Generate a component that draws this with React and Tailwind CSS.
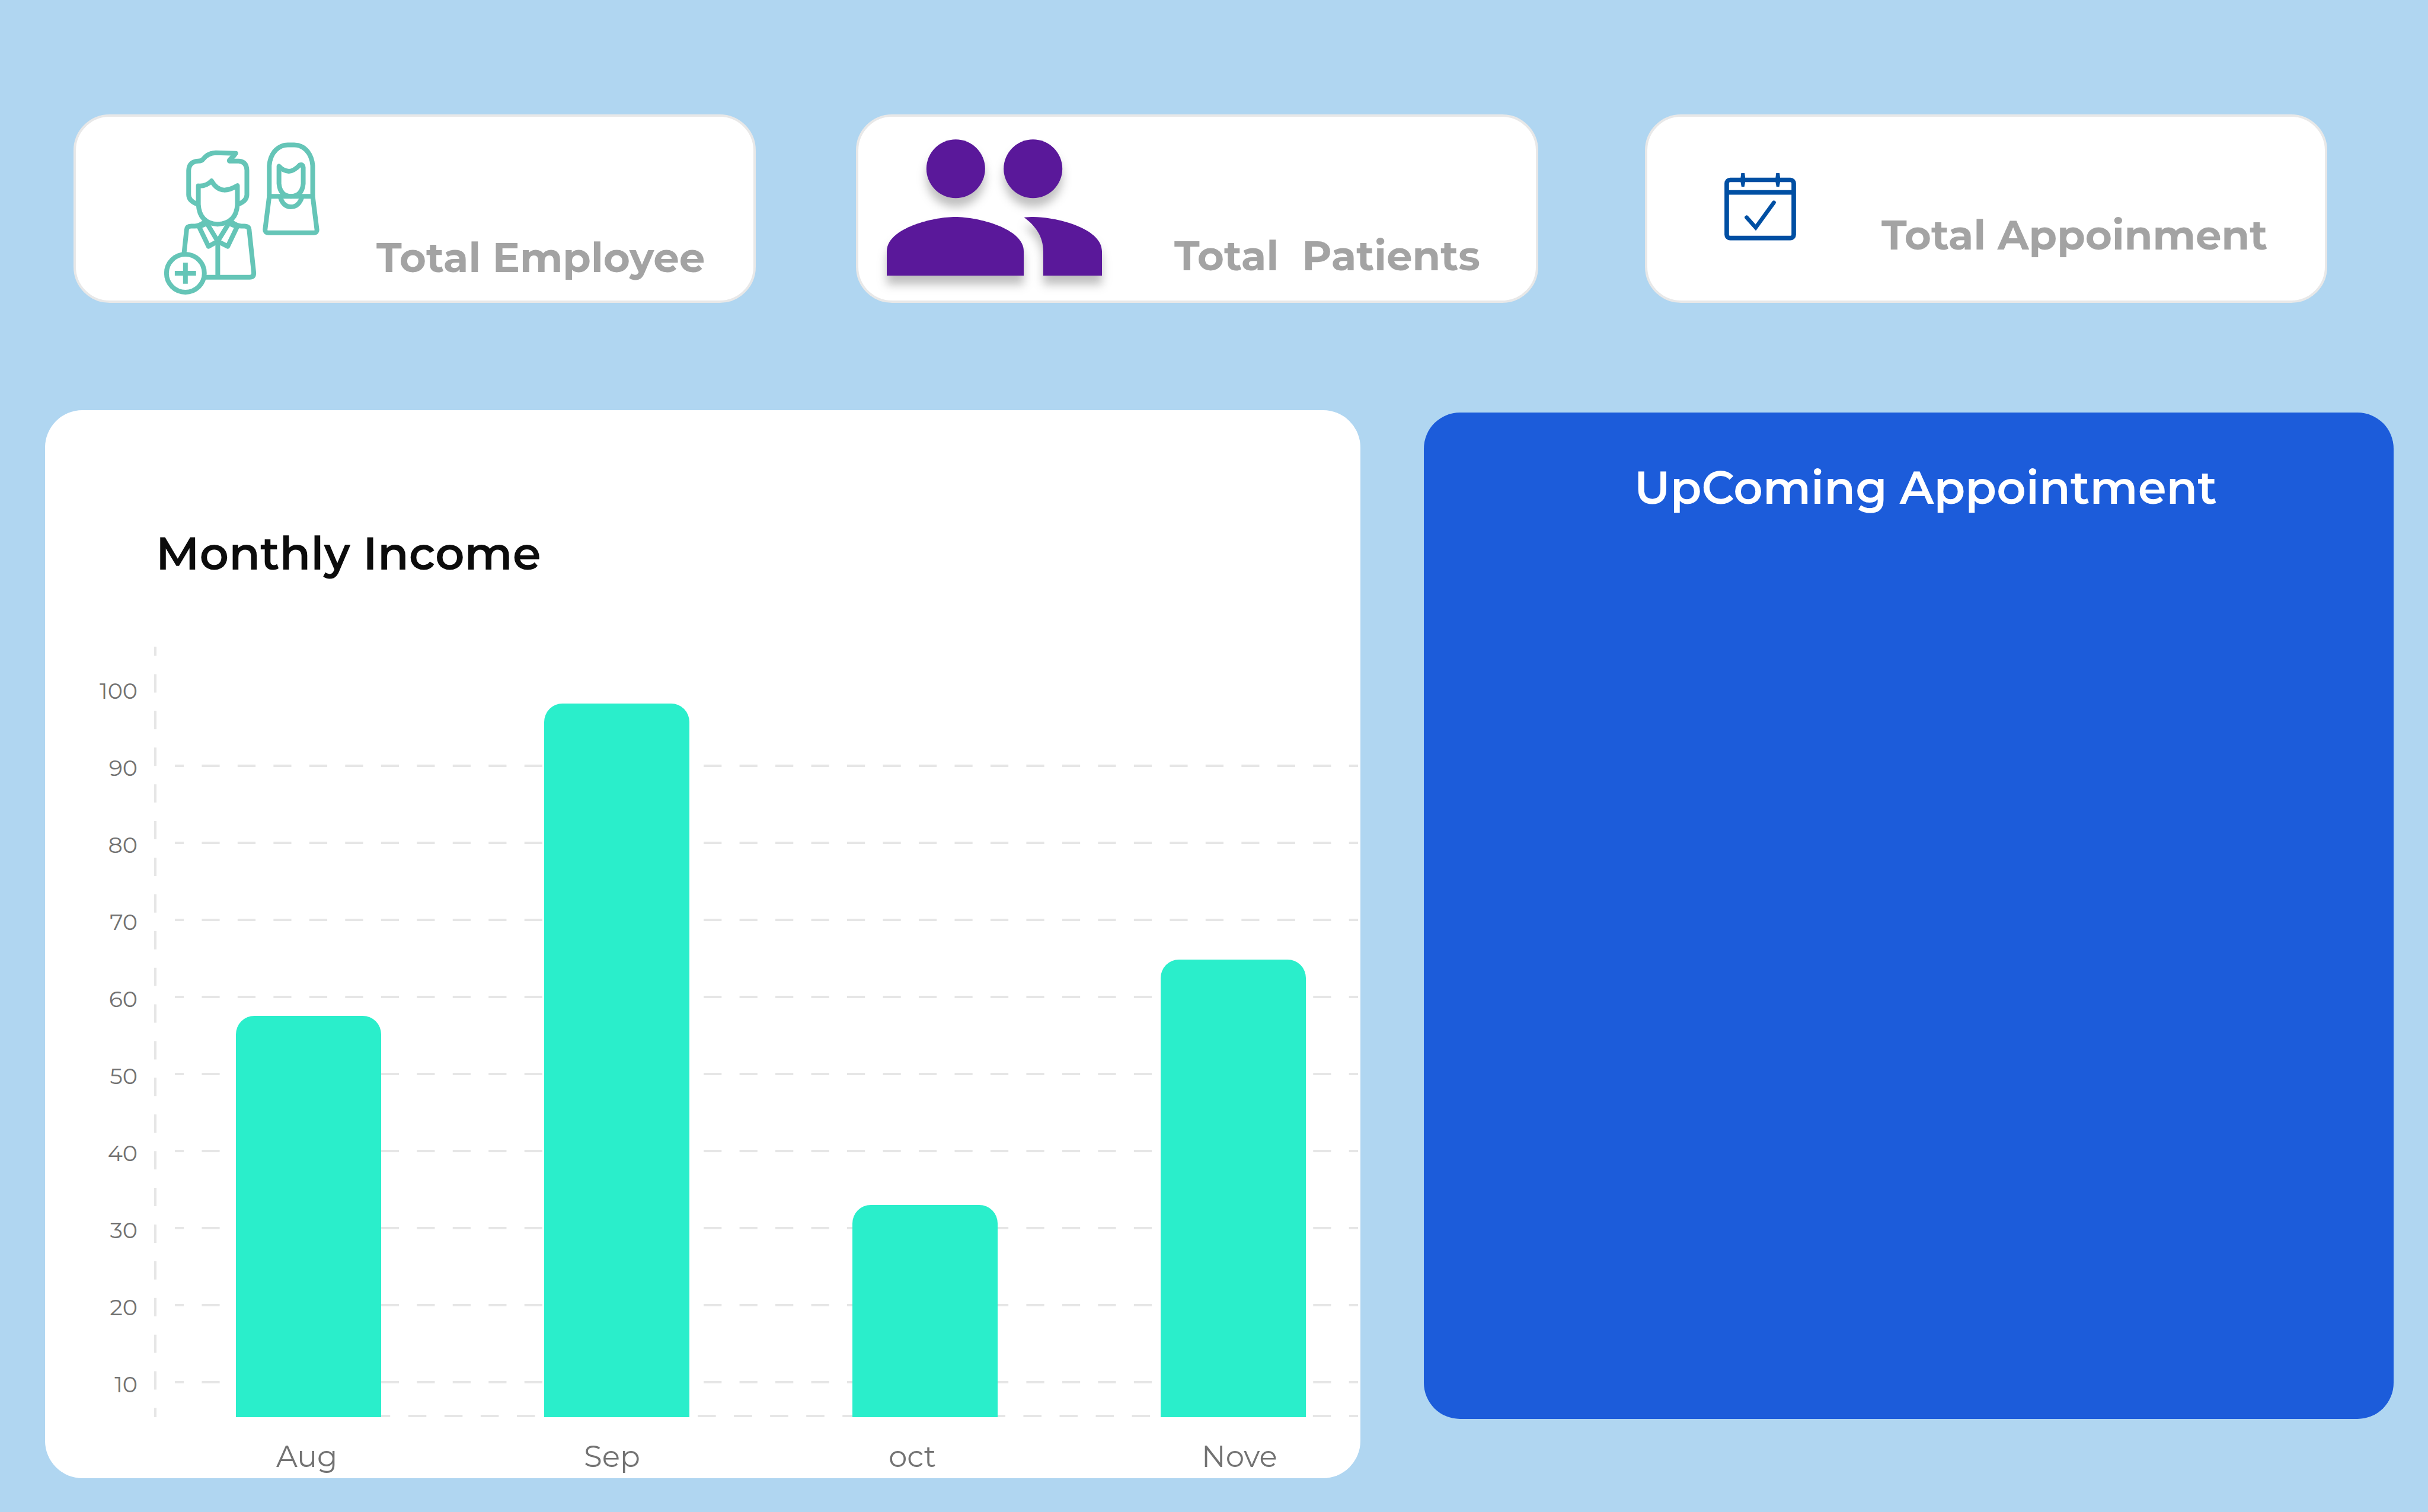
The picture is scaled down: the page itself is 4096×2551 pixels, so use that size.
const yLabels = [100, 90, 80, 70, 60, 50, 40, 30, 20, 10];
const gridLines = [201, 331, 461, 591, 721, 851, 981, 1111, 1241];

const bars = [
  { month: "Aug", x: 139, top: 623 },
  { month: "Sep", x: 659, top: 96 },
  { month: "oct", x: 1179, top: 942 },
  { month: "Nove", x: 1699, top: 528 },
];

const BAR_WIDTH = 245;
const BAR_RADIUS = 31;
const PLOT_BOTTOM = 1300;

function barPath({ x, top }) {
  const r = BAR_RADIUS;
  const right = x + BAR_WIDTH;
  return `M${x} ${PLOT_BOTTOM}V${top + r}A${r} ${r} 0 0 1 ${x + r} ${top}H${right - r}A${r} ${r} 0 0 1 ${right} ${top + r}V${PLOT_BOTTOM}Z`;
}

function EmployeeIcon() {
  return (
    <svg
      className="h-[260px] w-[265px] shrink-0 text-[#65c5b7] [&_*]:[vector-effect:non-scaling-stroke]"
      viewBox="460 205 680 815"
      preserveAspectRatio="none"
      fill="none"
      stroke="currentColor"
      strokeWidth="8"
      strokeLinejoin="round"
      aria-hidden="true"
    >
      {/* man: hair, fringe and face */}
      <path d="M607 538Q572 522 571 490V360Q573 314 612 311Q628 311 634 300Q655 268 688 267L775 270Q768 284 755 296Q744 309 748 311H788Q822 314 823 360V490Q822 522 788 538" />
      <path d="M613 442Q645 446 670 416Q692 463 725 464Q750 464 782 441V540Q778 640 696 645Q618 640 613 540Z" />
      {/* man: jacket, collar and buttons */}
      <path d="M640 634Q615 655 598 655H582Q563 655 562 675L551 800M757 634Q782 655 800 655H812Q832 655 833 675L853 903Q853 925 835 925H640" />
      <path d="M616 658L657 762L697 735L650 640Z" />
      <path d="M781 658L740 762L697 735L745 640Z" />
      <path d="M697 735V925" />
      {/* add badge */}
      <ellipse cx="557" cy="904" rx="82" ry="100" fill="#fff" />
      <path d="M511 904H603M557 848V960" />
      {/* woman */}
      <path d="M920 497V335C925 260 965 225 1000 225H1028C1063 225 1103 260 1108 335V497" />
      <path d="M920 497L902 672Q901 690 917 690H1112Q1128 690 1126 672L1108 497Z" />
      <path d="M967 500Q980 553 1014 553Q1048 553 1062 500" />
      <path d="M962 338V430Q967 496 1014 497Q1062 496 1067 430V345Q1065 325 1052 332Q1025 365 1005 365Q980 363 962 338Z" />
    </svg>
  );
}

function PatientsIcon() {
  return (
    <svg
      className="h-[231px] w-[363px] shrink-0 overflow-visible drop-shadow-[0_15px_8px_rgba(0,0,0,0.25)]"
      viewBox="1 5 22 14"
      fill="#5a189a"
      aria-hidden="true"
    >
      <circle cx="8.050" cy="8.070" r="3" />
      <circle cx="15.950" cy="8.070" r="3" />
      <path d="M8 13c-2.33 0-7 1.17-7 3.5V19h14v-2.500c0-2.330-4.670-3.500-7-3.500z" />
      <path d="M16 13c-.29 0-.62.02-.97.05 1.160.84 1.970 1.970 1.970 3.450V19h6v-2.500c0-2.330-4.670-3.500-7-3.500z" />
    </svg>
  );
}

function AppointmentIcon() {
  return (
    <svg
      className="h-[114px] w-[121px] shrink-0 text-[#004fa3]"
      viewBox="0 0 126 119"
      fill="none"
      stroke="currentColor"
      strokeWidth="8"
      aria-hidden="true"
    >
      <rect x="4" y="12" width="118" height="102.500" rx="6" />
      <path d="M4 34H122" />
      <path d="M29.500 0H35.500L36.500 8V16L35 24H30L28.500 16V8ZM91 0H97L98 8V16L96.500 24H91.500L90 16V8Z" fill="currentColor" stroke="none" />
      <path d="M39 78L55 96L87 52" strokeWidth="7" strokeLinecap="round" />
    </svg>
  );
}

function StatCard({ className, children }) {
  return (
    <section className={`flex h-[318px] items-start rounded-[61px] border-4 border-[#e8e8e8] bg-white ${className}`}>
      {children}
    </section>
  );
}

function StatLabel({ className, children }) {
  return (
    <h2 className={`text-[69px] leading-[80px] font-bold whitespace-pre text-[#a3a3a3] ${className}`}>{children}</h2>
  );
}

function IncomeChart() {
  return (
    <section className="rounded-[63px] bg-white pt-[191px]">
      <h2 className="pl-[187px] text-[77px] leading-[100px] font-semibold text-[#0c0c0c]">Monthly Income</h2>
      <div className="mt-[108px] flex h-[1300px]">
        <div className="w-[156px] shrink-0 pt-[9px] text-right text-[38px] text-[#727272]">
          {yLabels.map((n) => (
            <div key={n} className="flex h-[130px] items-center justify-end">
              {n}
            </div>
          ))}
        </div>
        <svg className="ml-[27px] h-[1300px] min-w-0 flex-1" viewBox="0 0 2036 1300" preserveAspectRatio="none" role="img" aria-label="Monthly income by month">
          <g stroke="#e6e6e6" strokeWidth="4">
            <path d="M3 0V1300" strokeDasharray="30.950 30.950" strokeDashoffset="15.475" />
            {gridLines.map((y) => (
              <path key={y} d={`M36 ${y}H2032`} strokeDasharray="30.240 30.240" strokeDashoffset="15.120" />
            ))}
            <path d="M384 1298H2032" strokeDasharray="30.520 30.520" strokeDashoffset="15.260" />
          </g>
          {bars.map((b) => (
            <path key={b.month} d={barPath(b)} fill="#2aeecb" />
          ))}
        </svg>
      </div>
      <div className="grid grid-cols-[519fr_514fr_528fr_268fr] pt-[32px] pb-[1px] pl-[390px] text-[50px] leading-[70px] text-[#727272]">
        {bars.map((b) => (
          <span key={b.month}>{b.month}</span>
        ))}
      </div>
    </section>
  );
}

export default function App() {
  return (
    <main className="min-h-screen bg-[#b0d6f1] pt-[193px] pb-[57px] font-['Montserrat','Inter',sans-serif]">
      <div className="grid grid-cols-[1151fr_169fr_1151fr_180fr_1151fr] pr-[170px] pl-[124px]">
        <StatCard className="pt-[41px] pl-[147px]">
          <EmployeeIcon />
          <StatLabel className="mt-[156px] ml-[95px]">Total Employee</StatLabel>
        </StatCard>
        <StatCard className="col-start-3 pt-[37px] pl-[48px]">
          <PatientsIcon />
          <StatLabel className="mt-[157px] ml-[122px]">{"Total  Patients"}</StatLabel>
        </StatCard>
        <StatCard className="col-start-5 pt-[95px] pl-[130px]">
          <AppointmentIcon />
          <StatLabel className="mt-[64px] ml-[144px]">Total Appoinment</StatLabel>
        </StatCard>
      </div>

      <div className="mt-[181px] grid grid-cols-[2218fr_1636fr] items-start gap-x-[107px] pr-[58px] pl-[76px]">
        <IncomeChart />
        <section className="mt-1 min-h-[1698px] rounded-[61px] bg-[#1c5cda] pt-[76px] pl-[355px]">
          <h2 className="text-[77px] leading-[100px] font-semibold text-white">UpComing Appointment</h2>
        </section>
      </div>
    </main>
  );
}
